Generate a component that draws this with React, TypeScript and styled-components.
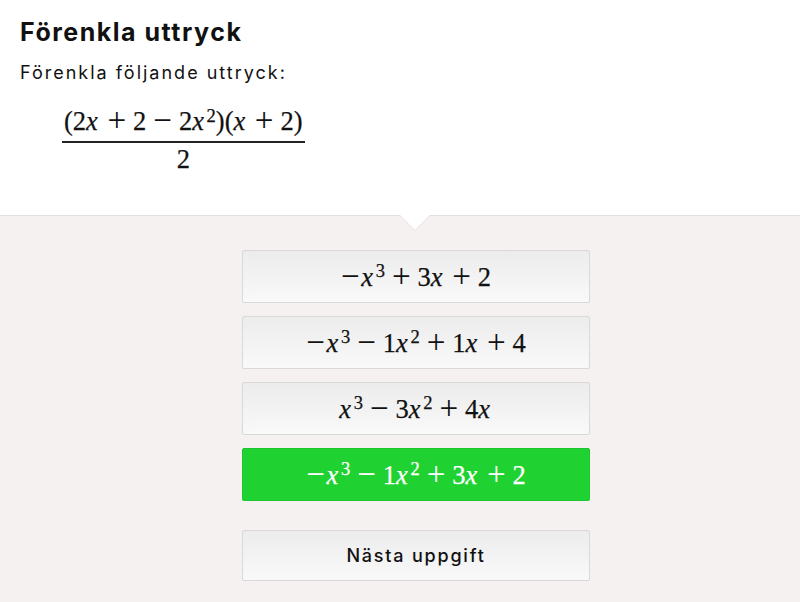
import React from "react";
import styled, { createGlobalStyle } from "styled-components";

const Global = createGlobalStyle`
  html, body { margin: 0; padding: 0; background: #f4f1f0; }
  body { font-family: "Inter", "Lato", sans-serif; color: #111; }
`;

const Page = styled.div`
  width: 800px;
  height: 602px;
  display: flex;
  flex-direction: column;
  overflow: hidden;
`;

const Header = styled.section`
  background: #ffffff;
  height: 215px;
  box-sizing: border-box;
  padding: 17px 20px 0;
`;

const Title = styled.h1`
  margin: 0;
  font-size: 25px;
  font-weight: 700;
  line-height: 30px;
  letter-spacing: 1.5px;
`;

const Prompt = styled.p`
  margin: 14px 0 0;
  font-size: 18px;
  line-height: 24px;
  letter-spacing: 2px;
`;

const Display = styled.div`
  margin: 21px 0 0 42px;
  display: flex;
`;

const Frac = styled.div`
  display: inline-flex;
  flex-direction: column;
  align-items: center;
`;

const Num = styled.div`
  padding: 0 2px 6px 2px;
`;

const Bar = styled.div`
  align-self: stretch;
  height: 2px;
  background: #222;
`;

const Den = styled.div`
  padding-top: 2px;
`;

const MathText = styled.span<{ $light?: boolean }>`
  font-family: "Liberation Serif", "DejaVu Serif", serif;
  font-size: 26.5px;
  line-height: 28px;
  color: ${(p) => (p.$light ? "#ffffff" : "#111")};
  white-space: nowrap;
  -webkit-text-stroke: 0.25px ${(p) => (p.$light ? "#ffffff" : "#111")};
`;

const V = styled.i`
  font-style: italic;
  margin-right: 0.1em;
`;

const Op = styled.span`
  font-size: 1.25em;
  margin: 0 0.21em;
  vertical-align: -0.04em;
  -webkit-text-stroke: 0;
`;

const Neg = styled.span`
  font-size: 1.25em;
  margin-right: 0.05em;
  vertical-align: -0.04em;
  -webkit-text-stroke: 0;
`;

const Sup = styled.sup`
  font-size: 0.7em;
  vertical-align: 0.45em;
  line-height: 0;
`;

const Lower = styled.section`
  flex: 1;
  position: relative;
  border-top: 1px solid #e3dfdd;
  background: #f4f1f0;
  display: flex;
  flex-direction: column;
  align-items: center;
  padding: 34px 0 0 32px;
`;

const Notch = styled.div`
  position: absolute;
  top: -1px;
  left: 400px;
  width: 0;
  height: 0;
  border-left: 15px solid transparent;
  border-right: 15px solid transparent;
  border-top: 15px solid #ffffff;
  filter: drop-shadow(0 1px 0 #e6e2e0);
`;

const Choices = styled.div`
  display: flex;
  flex-direction: column;
  gap: 13px;
`;

const Choice = styled.button<{ $correct?: boolean }>`
  width: 348px;
  height: 53px;
  box-sizing: border-box;
  border: 1px solid ${(p) => (p.$correct ? "#1cc62c" : "#d9d9d9")};
  border-radius: 2px;
  background: ${(p) =>
    p.$correct ? "#1fd231" : "linear-gradient(#ececec, #f9f9f9)"};
  display: flex;
  align-items: center;
  justify-content: center;
  padding: 0;
  cursor: pointer;
`;

const Next = styled(Choice)`
  margin-top: 29px;
  height: 51px;
  font-family: "Inter", "Lato", sans-serif;
  font-size: 18px;
  font-weight: 500;
  letter-spacing: 1.8px;
  color: #111;
`;

const M = ({ children, light }: { children: React.ReactNode; light?: boolean }) => (
  <MathText $light={light}>{children}</MathText>
);

export default function App() {
  return (
    <Page>
      <Global />
      <Header>
        <Title>Förenkla uttryck</Title>
        <Prompt>Förenkla följande uttryck:</Prompt>
        <Display>
          <Frac>
            <Num>
              <M>
                (2<V>x</V><Op>+</Op>2<Op>−</Op>2<V>x</V>
                <Sup>2</Sup>)(<V>x</V><Op>+</Op>2)
              </M>
            </Num>
            <Bar />
            <Den>
              <M>2</M>
            </Den>
          </Frac>
        </Display>
      </Header>
      <Lower>
        <Notch />
        <Choices>
          <Choice>
            <M>
              <Neg>−</Neg><V>x</V><Sup>3</Sup><Op>+</Op>3<V>x</V><Op>+</Op>2
            </M>
          </Choice>
          <Choice>
            <M>
              <Neg>−</Neg><V>x</V><Sup>3</Sup><Op>−</Op>1<V>x</V><Sup>2</Sup><Op>+</Op>1<V>x</V>
              <Op>+</Op>4
            </M>
          </Choice>
          <Choice>
            <M>
              <V>x</V><Sup>3</Sup><Op>−</Op>3<V>x</V><Sup>2</Sup><Op>+</Op>4<V>x</V>
            </M>
          </Choice>
          <Choice $correct>
            <M light>
              <Neg>−</Neg><V>x</V><Sup>3</Sup><Op>−</Op>1<V>x</V><Sup>2</Sup><Op>+</Op>3<V>x</V>
              <Op>+</Op>2
            </M>
          </Choice>
        </Choices>
        <Next>Nästa uppgift</Next>
      </Lower>
    </Page>
  );
}
